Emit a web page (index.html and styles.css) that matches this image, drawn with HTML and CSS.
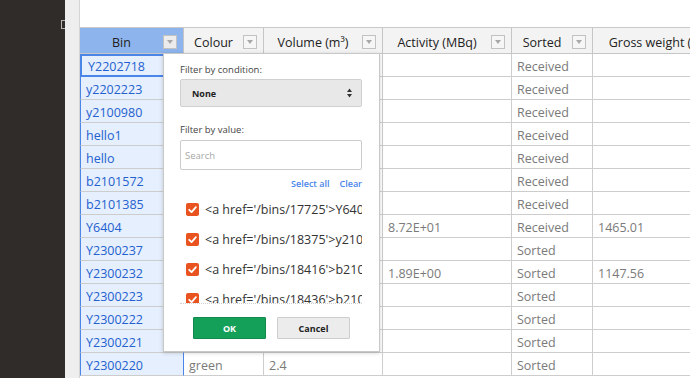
FILE: index.html
```html
<!DOCTYPE html>
<html>
<head>
<meta charset="utf-8">
<link rel="stylesheet" href="styles.css">
</head>
<body>
<div class="app">
  <div class="sidebar"><span class="side-icon"></span></div>
  <div class="gutter"></div>
  <div class="main">
    <div class="toparea"></div>
    <div class="grid">
      <div class="row head">
        <div class="hc sel"><span class="ht">Bin</span><i class="dd"></i></div>
        <div class="hc"><span class="ht">Colour</span><i class="dd"></i></div>
        <div class="hc"><span class="ht">Volume (m³)</span><i class="dd"></i></div>
        <div class="hc"><span class="ht">Activity (MBq)</span><i class="dd"></i></div>
        <div class="hc"><span class="ht">Sorted</span><i class="dd"></i></div>
        <div class="hc"><span class="ht">Gross weight (kg)</span><i class="dd"></i></div>
      </div>
      <div class="row"><div class="c bin active">Y2202718</div><div class="c"></div><div class="c"></div><div class="c"></div><div class="c">Received</div><div class="c"></div></div>
      <div class="row"><div class="c bin">y2202223</div><div class="c"></div><div class="c"></div><div class="c"></div><div class="c">Received</div><div class="c"></div></div>
      <div class="row"><div class="c bin">y2100980</div><div class="c"></div><div class="c"></div><div class="c"></div><div class="c">Received</div><div class="c"></div></div>
      <div class="row"><div class="c bin">hello1</div><div class="c"></div><div class="c"></div><div class="c"></div><div class="c">Received</div><div class="c"></div></div>
      <div class="row"><div class="c bin">hello</div><div class="c"></div><div class="c"></div><div class="c"></div><div class="c">Received</div><div class="c"></div></div>
      <div class="row"><div class="c bin">b2101572</div><div class="c"></div><div class="c"></div><div class="c"></div><div class="c">Received</div><div class="c"></div></div>
      <div class="row"><div class="c bin">b2101385</div><div class="c"></div><div class="c"></div><div class="c"></div><div class="c">Received</div><div class="c"></div></div>
      <div class="row"><div class="c bin">Y6404</div><div class="c"></div><div class="c"></div><div class="c">8.72E+01</div><div class="c">Received</div><div class="c">1465.01</div></div>
      <div class="row"><div class="c bin">Y2300237</div><div class="c"></div><div class="c"></div><div class="c"></div><div class="c">Sorted</div><div class="c"></div></div>
      <div class="row"><div class="c bin">Y2300232</div><div class="c"></div><div class="c"></div><div class="c">1.89E+00</div><div class="c">Sorted</div><div class="c">1147.56</div></div>
      <div class="row"><div class="c bin">Y2300223</div><div class="c"></div><div class="c"></div><div class="c"></div><div class="c">Sorted</div><div class="c"></div></div>
      <div class="row"><div class="c bin">Y2300222</div><div class="c"></div><div class="c"></div><div class="c"></div><div class="c">Sorted</div><div class="c"></div></div>
      <div class="row"><div class="c bin">Y2300221</div><div class="c"></div><div class="c"></div><div class="c"></div><div class="c">Sorted</div><div class="c"></div></div>
      <div class="row"><div class="c bin">Y2300220</div><div class="c">green</div><div class="c">2.4</div><div class="c"></div><div class="c">Sorted</div><div class="c"></div></div>
    </div>
  </div>
</div>

<div class="popup">
  <div class="label">Filter by condition:</div>
  <div class="select"><span>None</span>
    <svg width="5" height="10" viewBox="0 0 5 10"><path d="M0 4 L2.5 0.5 L5 4 Z M0 6 L5 6 L2.5 9.5 Z" fill="#333"/></svg>
  </div>
  <div class="label label2">Filter by value:</div>
  <div class="search">Search</div>
  <div class="links"><span>Select all</span><span>Clear</span></div>
  <div class="list">
    <div class="item"><svg class="cb" width="13" height="13" viewBox="0 0 13 13"><rect width="13" height="13" rx="2" fill="#e9531f"/><path d="M3.2 6.8 L5.6 9.1 L9.9 4.2" stroke="#fff" stroke-width="1.8" fill="none" stroke-linecap="round" stroke-linejoin="round"/></svg><span class="it">&lt;a href='/bins/17725'&gt;Y6404&lt;/a&gt;</span></div>
    <div class="item"><svg class="cb" width="13" height="13" viewBox="0 0 13 13"><rect width="13" height="13" rx="2" fill="#e9531f"/><path d="M3.2 6.8 L5.6 9.1 L9.9 4.2" stroke="#fff" stroke-width="1.8" fill="none" stroke-linecap="round" stroke-linejoin="round"/></svg><span class="it">&lt;a href='/bins/18375'&gt;y2100980&lt;/a&gt;</span></div>
    <div class="item"><svg class="cb" width="13" height="13" viewBox="0 0 13 13"><rect width="13" height="13" rx="2" fill="#e9531f"/><path d="M3.2 6.8 L5.6 9.1 L9.9 4.2" stroke="#fff" stroke-width="1.8" fill="none" stroke-linecap="round" stroke-linejoin="round"/></svg><span class="it">&lt;a href='/bins/18416'&gt;b2101572&lt;/a&gt;</span></div>
    <div class="item"><svg class="cb" width="13" height="13" viewBox="0 0 13 13"><rect width="13" height="13" rx="2" fill="#e9531f"/><path d="M3.2 6.8 L5.6 9.1 L9.9 4.2" stroke="#fff" stroke-width="1.8" fill="none" stroke-linecap="round" stroke-linejoin="round"/></svg><span class="it">&lt;a href='/bins/18436'&gt;b2101385&lt;/a&gt;</span></div>
  </div>
  <div class="buttons">
    <button class="btn ok">OK</button>
    <button class="btn cancel">Cancel</button>
  </div>
</div>
</body>
</html>
```

FILE: styles.css
```css
html, body {
  margin: 0;
  padding: 0;
}
body {
  width: 690px;
  height: 378px;
  overflow: hidden;
  position: relative;
  font-family: "Open Sans", "Noto Sans", sans-serif;
  background: #fff;
}
.app {
  display: flex;
  height: 378px;
}
.sidebar {
  width: 65px;
  flex: none;
  background: #302c29;
  display: flex;
  justify-content: flex-end;
  align-items: flex-start;
  padding-top: 19px;
  box-sizing: border-box;
}
.side-icon {
  width: 6px;
  height: 7px;
  border: 1px solid #b5b5b5;
  margin-right: -4px;
  margin-top: 1px;
}
.gutter {
  width: 15px;
  flex: none;
  background: #eeeeee;
  border-right: 1px solid #d4d4d4;
  box-sizing: border-box;
}
.main {
  flex: 1;
  min-width: 0;
  overflow: hidden;
  background: #fff;
}
.toparea {
  height: 27px;
}
.grid {
  border-top: 1px solid #c9c9c9;
  width: max-content;
}
.row {
  display: grid;
  grid-template-columns: 104px 80px 119px 129px 81px 152px;
  height: 23px;
}
.row.head {
  height: 26px;
}
.hc {
  display: flex;
  align-items: center;
  background: #f3f3f3;
  border-right: 1px solid #c6c6c6;
  border-bottom: 1px solid #c6c6c6;
  box-sizing: border-box;
  font-size: 12.5px;
  color: #222;
  white-space: nowrap;
}
.hc.sel {
  background: #8db4ec;
}
.ht {
  flex: 1;
  text-align: center;
  padding-top: 4px;
}
.dd {
  flex: none;
  width: 14px;
  height: 14px;
  margin: 2px 6px 0 0;
  border: 1px solid #c2c2c2;
  background: #f6f6f6;
  box-sizing: border-box;
  display: flex;
  align-items: center;
  justify-content: center;
}
.hc.sel .dd {
  background: #ececec;
}
.dd::after {
  content: "";
  border-left: 3px solid transparent;
  border-right: 3px solid transparent;
  border-top: 4px solid #a8a8a8;
  margin-top: 1px;
}
.c {
  border-right: 1px solid #cdcdcd;
  border-bottom: 1px solid #cdcdcd;
  box-sizing: border-box;
  padding: 2px 5px 0;
  line-height: 21px;
  font-size: 12.5px;
  color: #7a7a7a;
  white-space: nowrap;
  overflow: hidden;
}
.c.bin {
  background: #e6effd;
  color: #2361cf;
  border-left: 1px solid #4a86e8;
  border-right: 1px solid #4a86e8;
}
.c.bin.active {
  border: 2px solid #4a86e8;
  padding: 1px 5px 0 6px;
  line-height: 19px;
}

.popup {
  position: absolute;
  left: 163px;
  top: 53px;
  width: 217px;
  height: 299px;
  background: #fff;
  border: 1px solid #c8c8c8;
  box-shadow: 0 1px 4px rgba(0,0,0,0.18);
  box-sizing: border-box;
  padding: 8px 17px 0 16px;
  display: flex;
  flex-direction: column;
}
.label {
  font-size: 9.5px;
  color: #444;
  line-height: 16px;
}
.label2 {
  margin-top: 15px;
}
.select {
  margin-top: 1px;
  height: 28px;
  background: #e8e8e8;
  border: 1px solid #d0d0d0;
  border-radius: 2px;
  box-sizing: border-box;
  display: flex;
  align-items: center;
  justify-content: space-between;
  padding: 0 9px 0 11px;
  font-weight: 700;
  font-size: 9px;
  color: #222;
}
.search {
  margin-top: 2px;
  height: 30px;
  border: 1px solid #cccccc;
  border-radius: 2px;
  box-sizing: border-box;
  padding-left: 4px;
  font-size: 9.5px;
  color: #a8a8a8;
  display: flex;
  align-items: center;
}
.links {
  margin-top: 6px;
  display: flex;
  justify-content: flex-end;
  gap: 10px;
  font-size: 9px;
  font-weight: 600;
  color: #4a86e8;
  line-height: 16px;
}
.list {
  margin-top: 2px;
  height: 109px;
  overflow: hidden;
  border-bottom: 1px dotted #d0d0d0;
  flex: none;
}
.item {
  height: 30px;
  display: flex;
  align-items: center;
  padding-left: 6px;
  gap: 6px;
}
.cb {
  flex: none;
}
.it {
  font-size: 12.5px;
  color: #333;
  white-space: nowrap;
  overflow: hidden;
}
.buttons {
  margin-top: 13px;
  display: flex;
  gap: 11px;
  padding-left: 13px;
}
.btn {
  width: 73px;
  height: 22px;
  box-sizing: border-box;
  font-family: "Open Sans", sans-serif;
  font-weight: 700;
  font-size: 9px;
  padding: 0;
  border-radius: 1px;
}
.ok {
  background: #15a059;
  border: 1px solid #0f8a4b;
  color: #fff;
}
.cancel {
  background: #ececec;
  border: 1px solid #cdcdcd;
  color: #222;
}
```
